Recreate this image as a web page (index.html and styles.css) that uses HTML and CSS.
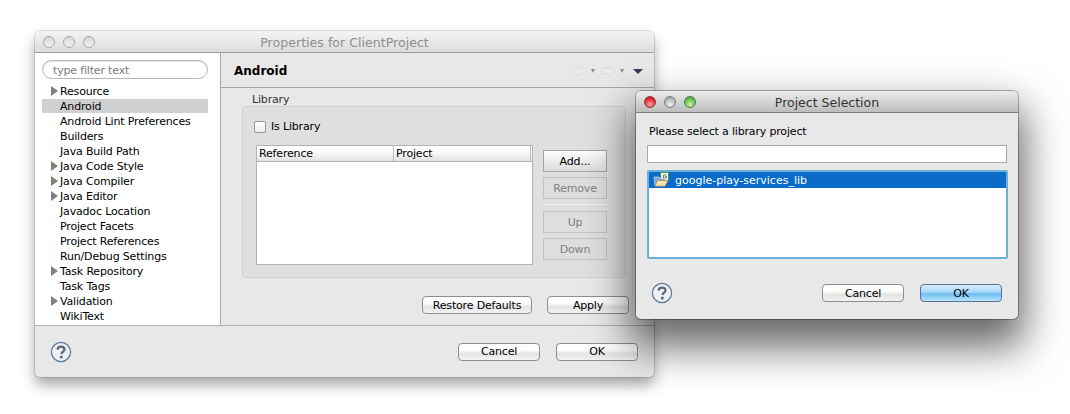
FILE: index.html
```html
<!DOCTYPE html>
<html>
<head>
  <title>Properties for ClientProject</title>
  <link rel="stylesheet" href="styles.css">
</head>
<body>
  <svg class="defs" width="0" height="0">
    <symbol id="help" viewBox="0 0 22 22">
      <circle cx="11" cy="11" r="9.6" fill="#eef0f3" stroke="#5f7a98" stroke-width="1.3"/>
      <path d="M7.6 8.6C7.7 6.6 9.100 5.600 11 5.600C13 5.600 14.500 6.700 14.500 8.500C14.500 10.500 11.800 10.800 11.500 13" fill="none" stroke="#5d6a78" stroke-width="2.300"/>
      <circle cx="11.300" cy="16" r="1.500" fill="#5d6a78"/>
    </symbol>
  </svg>

  <div class="window main-window">
    <div class="titlebar">
      <div class="lights">
        <span class="light"></span>
        <span class="light"></span>
        <span class="light"></span>
      </div>
      <div class="title title-inactive">Properties for ClientProject</div>
    </div>

    <div class="main-body">
      <div class="sidebar">
        <input class="filter" type="text" placeholder="type filter text">
        <ul class="tree">
          <li class="has-kids">Resource</li>
          <li class="selected">Android</li>
          <li>Android Lint Preferences</li>
          <li>Builders</li>
          <li>Java Build Path</li>
          <li class="has-kids">Java Code Style</li>
          <li class="has-kids">Java Compiler</li>
          <li class="has-kids">Java Editor</li>
          <li>Javadoc Location</li>
          <li>Project Facets</li>
          <li>Project References</li>
          <li>Run/Debug Settings</li>
          <li class="has-kids">Task Repository</li>
          <li>Task Tags</li>
          <li class="has-kids">Validation</li>
          <li>WikiText</li>
        </ul>
      </div>

      <div class="content">
        <div class="content-head">
          <h2>Android</h2>
          <div class="nav-icons">
            <svg width="15" height="14" viewBox="0 0 15 14"><path d="M7 1.500L1 7L7 12.500V9.500H14V4.500H7Z" fill="#ececec" stroke="#dcdcdc"/></svg>
            <span class="mini-arrow"></span>
            <svg class="nav-next" width="15" height="14" viewBox="0 0 15 14"><path d="M8 1.500L14 7L8 12.500V9.500H1V4.500H8Z" fill="#ececec" stroke="#dcdcdc"/></svg>
            <span class="mini-arrow"></span>
            <span class="menu-arrow"></span>
          </div>
        </div>

        <div class="content-main">
          <div class="group-label">Library</div>
          <div class="group">
            <label class="check-row"><span class="checkbox"></span>Is Library</label>
            <div class="group-row">
              <div class="lib-table">
                <div class="lib-head">
                  <div class="col col-ref">Reference</div>
                  <div class="col col-project">Project</div>
                </div>
              </div>
              <div class="side-buttons">
                <button class="square-btn">Add...</button>
                <button class="square-btn" disabled>Remove</button>
                <div class="btn-sep"></div>
                <button class="square-btn" disabled>Up</button>
                <button class="square-btn" disabled>Down</button>
              </div>
            </div>
          </div>
          <div class="apply-row">
            <button class="btn btn-restore">Restore Defaults</button>
            <button class="btn">Apply</button>
          </div>
        </div>
      </div>
    </div>

    <div class="footer main-footer">
      <svg class="help" width="22" height="22"><use href="#help"/></svg>
      <div class="footer-buttons">
        <button class="btn">Cancel</button>
        <button class="btn">OK</button>
      </div>
    </div>
  </div>

  <div class="window dialog">
    <div class="titlebar dialog-title">
      <div class="lights">
        <span class="light light-red"></span>
        <span class="light light-grey"></span>
        <span class="light light-green"></span>
      </div>
      <div class="title">Project Selection</div>
    </div>
    <div class="dialog-body">
      <div class="prompt">Please select a library project</div>
      <input class="search" type="text">
      <div class="project-list">
        <div class="project-row">
          <svg width="17" height="16" viewBox="0 0 17 16">
            <rect x="7.500" y="0.500" width="8" height="8" fill="#fff" stroke="#4d8a5c"/>
            <path d="M13.500 3H10.500V6H13.500V4.500H12" fill="none" stroke="#4d8a5c"/>
            <path d="M1 5H6L7 6.500H12V14H2Z" fill="#7fa8d8" stroke="#c8d8ec" stroke-width=".7"/>
            <path d="M2 14L4.500 8.500H15L12 14Z" fill="#f8e3ac" stroke="#b08a48" stroke-width=".7"/>
          </svg>
          <span>google-play-services_lib</span>
        </div>
      </div>
    </div>
    <div class="footer dialog-footer">
      <svg class="help" width="22" height="22"><use href="#help"/></svg>
      <div class="footer-buttons">
        <button class="btn">Cancel</button>
        <button class="btn btn-default">OK</button>
      </div>
    </div>
  </div>
</body>
</html>
```

FILE: styles.css
```css
html, body {
  margin: 0;
  height: 100%;
}

body {
  position: relative;
  width: 1070px;
  height: 414px;
  overflow: hidden;
  background-color: #fff;
  font-family: "DejaVu Sans", sans-serif;
  font-size: 11px;
  letter-spacing: -0.17px;
  color: #000;
}

.defs {
  position: absolute;
}

.window {
  position: absolute;
  box-sizing: border-box;
  display: flex;
  flex-direction: column;
  background-color: #e8e8e8;
  border-radius: 5px;
}

.main-window {
  left: 35px;
  top: 31px;
  width: 619px;
  height: 346px;
  box-shadow: 0 0 0 1px rgba(0, 0, 0, 0.12), 0 8px 14px rgba(0, 0, 0, 0.35);
}

.dialog {
  left: 636px;
  top: 91px;
  width: 382px;
  height: 228px;
  box-shadow: 0 0 0 1px rgba(0, 0, 0, 0.3), 0 22px 42px 6px rgba(0, 0, 0, 0.6);
}

/* title bars */
.titlebar {
  position: relative;
  box-sizing: border-box;
  flex: none;
  height: 22px;
  padding-top: 2px;
  display: flex;
  align-items: center;
  justify-content: center;
  border-radius: 5px 5px 0 0;
  border-bottom: 1px solid #9c9c9c;
  background-image: linear-gradient(#f4f4f4, #dcdcdc);
}

.dialog-title {
  background-image: linear-gradient(#ececec, #bdbdbd);
  border-bottom-color: #808080;
}

.lights {
  position: absolute;
  left: 8px;
  top: 5px;
  display: flex;
  gap: 8px;
}

.light {
  box-sizing: border-box;
  width: 12px;
  height: 12px;
  border-radius: 50%;
  background-image: linear-gradient(#d8d8d8, #f0f0f0);
  border: 1px solid #a8a8a8;
}

.light-red {
  background-image: radial-gradient(circle at 50% 75%, #ffa0a0, #e0282c 65%, #a01016);
  border-color: #8c3a3c;
}

.light-grey {
  background-image: radial-gradient(circle at 50% 75%, #f4f4f4, #b4b4b4 65%, #8a8a8a);
  border-color: #7c7c7c;
}

.light-green {
  background-image: radial-gradient(circle at 50% 75%, #c8f4a4, #62b84a 65%, #3c8a2c);
  border-color: #4c7c40;
}

.title {
  font-size: 12.5px;
  letter-spacing: 0;
  color: #333;
}

.title-inactive {
  font-size: 12.6px;
  color: #8e8e8e;
}

/* main window layout */
.main-body {
  flex: 1;
  display: flex;
  min-height: 0;
}

.sidebar {
  box-sizing: border-box;
  flex: none;
  width: 186px;
  padding: 7px 12px 0 7px;
  background-color: #fff;
  border-right: 1px solid #a8a8a8;
}

.filter {
  box-sizing: border-box;
  display: block;
  width: 166px;
  height: 19px;
  margin: 0;
  padding: 2px 10px 0;
  border: 1px solid #b8b8b8;
  border-radius: 10px;
  box-shadow: inset 0 1px 1px rgba(0, 0, 0, 0.12);
  font-family: inherit;
  font-size: 11px;
  letter-spacing: inherit;
  outline: none;
}

.filter::placeholder {
  color: #7c7c7c;
}

.tree {
  list-style: none;
  margin: 5px 0 0;
  padding: 0;
  width: 166px;
}

.tree li {
  position: relative;
  height: 15px;
  line-height: 15px;
  padding-left: 18px;
  white-space: nowrap;
}

.tree .selected {
  background-color: #d0d0d0;
  height: 14px;
  margin-bottom: 1px;
}

.tree .has-kids::before {
  content: "";
  position: absolute;
  left: 9px;
  top: 2px;
  border-left: 7px solid #808080;
  border-top: 5px solid transparent;
  border-bottom: 5px solid transparent;
}

.content {
  flex: 1;
  min-width: 0;
  display: flex;
  flex-direction: column;
}

.content-head {
  box-sizing: border-box;
  flex: none;
  height: 35px;
  display: flex;
  align-items: center;
  justify-content: space-between;
  padding: 2px 11px 0 13px;
  border-bottom: 1px solid #a8a8a8;
}

.content-head h2 {
  margin: 0;
  font-size: 12px;
  font-weight: bold;
  letter-spacing: 0;
}

.nav-icons {
  display: flex;
  align-items: center;
}

.nav-next {
  margin-left: 6px;
}

.mini-arrow {
  margin-left: 4px;
  border-top: 4px solid #8c8c8c;
  border-left: 2.5px solid transparent;
  border-right: 2.5px solid transparent;
}

.menu-arrow {
  margin-left: 9px;
  border-top: 5px solid #3c3464;
  border-left: 5px solid transparent;
  border-right: 5px solid transparent;
}

.content-main {
  flex: 1;
  padding: 4px 25px 0 21px;
}

.group-label {
  height: 14px;
  line-height: 15px;
  margin-left: 10px;
  color: #333;
}

.group {
  box-sizing: border-box;
  width: 384px;
  height: 172px;
  padding: 13px 18px 0 13px;
  background-color: #dfdfdf;
  border: 1px solid #cfcfcf;
  border-radius: 4px;
}

.check-row {
  display: flex;
  align-items: center;
  gap: 5px;
  height: 13px;
  margin-left: -2px;
}

.checkbox {
  box-sizing: border-box;
  width: 12px;
  height: 12px;
  background-image: linear-gradient(#fff, #ececec);
  border: 1px solid #999;
  border-radius: 2px;
}

.group-row {
  display: flex;
  justify-content: space-between;
  margin-top: 12px;
}

.lib-table {
  box-sizing: border-box;
  width: 277px;
  height: 120px;
  background-color: #fff;
  border: 1px solid #b4b4b4;
}

.lib-head {
  box-sizing: border-box;
  height: 16px;
  display: flex;
  border-bottom: 1px solid #b4b4b4;
  background-image: linear-gradient(#fff 30%, #e2e2e2);
}

.col {
  box-sizing: border-box;
  line-height: 15px;
  padding-left: 2px;
  border-right: 1px solid #bcbcbc;
}

.col-ref {
  width: 137px;
}

.col-project {
  width: 137px;
}

.side-buttons {
  display: flex;
  flex-direction: column;
  margin-top: 5px;
  gap: 5px;
}

.square-btn {
  box-sizing: border-box;
  width: 64px;
  height: 22px;
  padding: 0;
  font-family: inherit;
  font-size: 11px;
  letter-spacing: inherit;
  color: #000;
  background-image: linear-gradient(#fdfdfd, #dcdcdc);
  border: 1px solid #a4a4a4;
}

.square-btn:disabled {
  color: #808080;
  background-image: none;
  background-color: #dedede;
  border-color: #c0c0c0;
}

.btn-sep {
  height: 1px;
  margin: 0 0 1px;
  background-color: #f2f2f2;
}

.apply-row {
  display: flex;
  justify-content: flex-end;
  gap: 15px;
  margin-top: 18px;
}

.btn {
  box-sizing: border-box;
  width: 82px;
  height: 18px;
  padding: 0;
  font-family: inherit;
  font-size: 11px;
  letter-spacing: inherit;
  color: #000;
  background-image: linear-gradient(#fff, #fdfdfd 40%, #e4e4e4 60%, #f2f2f2);
  border: 1px solid #8e8e8e;
  border-radius: 4px;
}

.btn-restore {
  width: 110px;
}

.btn-default {
  background-image: linear-gradient(#d4ecfc, #a8d8f8 45%, #6cbcf2 55%, #b4e6fc);
  border-color: #5a6e96;
}

/* bottom bars */
.footer {
  flex: none;
  display: flex;
  align-items: center;
  justify-content: space-between;
}

.main-footer {
  box-sizing: border-box;
  height: 52px;
  padding: 0 16px 0 15px;
  border-top: 1px solid #b0b0b0;
}

.dialog-footer {
  flex: 1;
  padding: 8px 16px 0 15px;
}

.footer-buttons {
  display: flex;
  gap: 16px;
}

/* dialog */
.dialog-body {
  flex: none;
  padding: 11px 11px 0 11px;
}

.prompt {
  height: 15px;
  line-height: 15px;
  margin-left: 2px;
}

.search {
  box-sizing: border-box;
  display: block;
  width: 360px;
  height: 18px;
  margin: 6px 0 0;
  padding: 0 3px;
  background-color: #fff;
  border: 1px solid #a8a8a8;
  outline: none;
}

.project-list {
  box-sizing: border-box;
  width: 361px;
  height: 89px;
  margin-top: 7px;
  background-color: #fff;
  border: 2px solid #6cb0d8;
  border-radius: 2px;
}

.project-row {
  height: 16px;
  display: flex;
  align-items: center;
  gap: 5px;
  padding-left: 4px;
  background-color: #0a6cc8;
  color: #fff;
  letter-spacing: 0;
}
```
